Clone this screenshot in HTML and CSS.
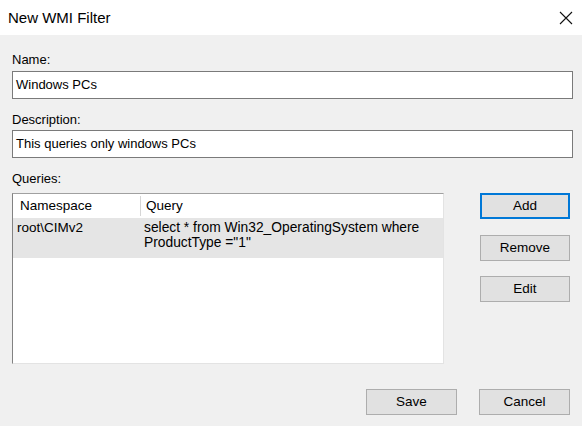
FILE: index.html
```html
<!DOCTYPE html>
<html>
<head>
<meta charset="utf-8">
<link rel="stylesheet" href="styles.css">
</head>
<body>
<div class="window">
  <div class="titlebar">
    <span class="title">New WMI Filter</span>
    <svg class="close" width="14" height="14" viewBox="0 0 14 14"><path d="M1 1 L13 13 M13 1 L1 13" stroke="#111" stroke-width="1.1" fill="none"/></svg>
  </div>
  <div class="content">
    <div class="label name-label">Name:</div>
    <div class="textbox">Windows PCs</div>
    <div class="label desc-label">Description:</div>
    <div class="textbox">This queries only windows PCs</div>
    <div class="label queries-label">Queries:</div>
    <div class="main">
      <div class="listview">
        <div class="header">
          <div class="hcell col-ns">Namespace</div>
          <div class="hcell col-q">Query</div>
        </div>
        <div class="row selected">
          <div class="cell col-ns">root\CIMv2</div>
          <div class="cell col-q">select * from Win32_OperatingSystem where<br>ProductType ="1"</div>
        </div>
      </div>
      <div class="side">
        <div class="btn default">Add</div>
        <div class="btn">Remove</div>
        <div class="btn">Edit</div>
      </div>
    </div>
    <div class="footer">
      <div class="btn">Save</div>
      <div class="btn">Cancel</div>
    </div>
  </div>
</div>
</body>
</html>
```

FILE: styles.css
```css
html, body {
  margin: 0;
  padding: 0;
}
body {
  width: 582px;
  height: 426px;
  overflow: hidden;
  font-family: "Liberation Sans", Arial, sans-serif;
  font-size: 13px;
  color: #000;
  background: #f0f0f0;
}
.window {
  width: 582px;
  height: 426px;
  display: flex;
  flex-direction: column;
  background: #f0f0f0;
}
.titlebar {
  height: 35px;
  background: #fff;
  display: flex;
  align-items: center;
  justify-content: space-between;
  padding: 0 8px 0 8px;
  box-sizing: border-box;
}
.title {
  font-size: 15px;
  color: #000;
}
.close {
  display: block;
  margin-right: 1px;
}
.content {
  padding: 17px 9px 0 12px;
  display: flex;
  flex-direction: column;
}
.label {
  line-height: 15px;
  height: 15px;
}
.name-label { margin-bottom: 4px; }
.desc-label { margin-top: 13px; margin-bottom: 3px; }
.queries-label { margin-top: 13px; margin-bottom: 7px; }
.textbox {
  height: 28px;
  box-sizing: border-box;
  border: 1px solid #7a7a7a;
  background: #fff;
  padding-left: 3px;
  line-height: 26px;
  white-space: nowrap;
}
.main {
  display: flex;
  align-items: flex-start;
}
.listview {
  width: 432px;
  height: 171px;
  box-sizing: border-box;
  border-top: 1px solid #a0a0a0;
  border-left: 1px solid #828282;
  border-right: 1px solid #e3e3e3;
  border-bottom: 1px solid #e3e3e3;
  background: #fff;
  display: flex;
  flex-direction: column;
}
.header {
  height: 24px;
  display: flex;
  background: #fff;
  font-size: 13.5px;
}
.hcell {
  line-height: 24px;
  box-sizing: border-box;
}
.header .col-ns {
  width: 128px;
  padding-left: 7px;
  border-right: 1px solid #d6d6d6;
  height: 20px;
  margin-top: 2px;
  line-height: 20px;
}
.header .col-q {
  padding-left: 5px;
  flex: 1;
}
.row {
  display: flex;
  height: 40px;
  box-sizing: border-box;
  padding-top: 2px;
  line-height: 15px;
}
.row.selected {
  background: #e5e5e5;
}
.row .col-ns {
  width: 129px;
  padding-left: 4px;
  box-sizing: border-box;
  font-size: 13.5px;
}
.row .col-q {
  padding-left: 2px;
  flex: 1;
  font-size: 13.8px;
}
.side {
  margin-left: 36px;
  display: flex;
  flex-direction: column;
  gap: 16px;
}
.btn {
  width: 90px;
  height: 26px;
  box-sizing: border-box;
  border: 1px solid #adadad;
  background: #e1e1e1;
  text-align: center;
  line-height: 24px;
  font-size: 13.5px;
}
.btn.default {
  border: 2px solid #0078d7;
  line-height: 22px;
}
.side .btn:nth-child(3) { margin-top: -1px; }
.footer {
  display: flex;
  justify-content: flex-end;
  gap: 22px;
  margin-top: 25px;
  padding-right: 3px;
}
.footer .btn { width: 91px; }
```
